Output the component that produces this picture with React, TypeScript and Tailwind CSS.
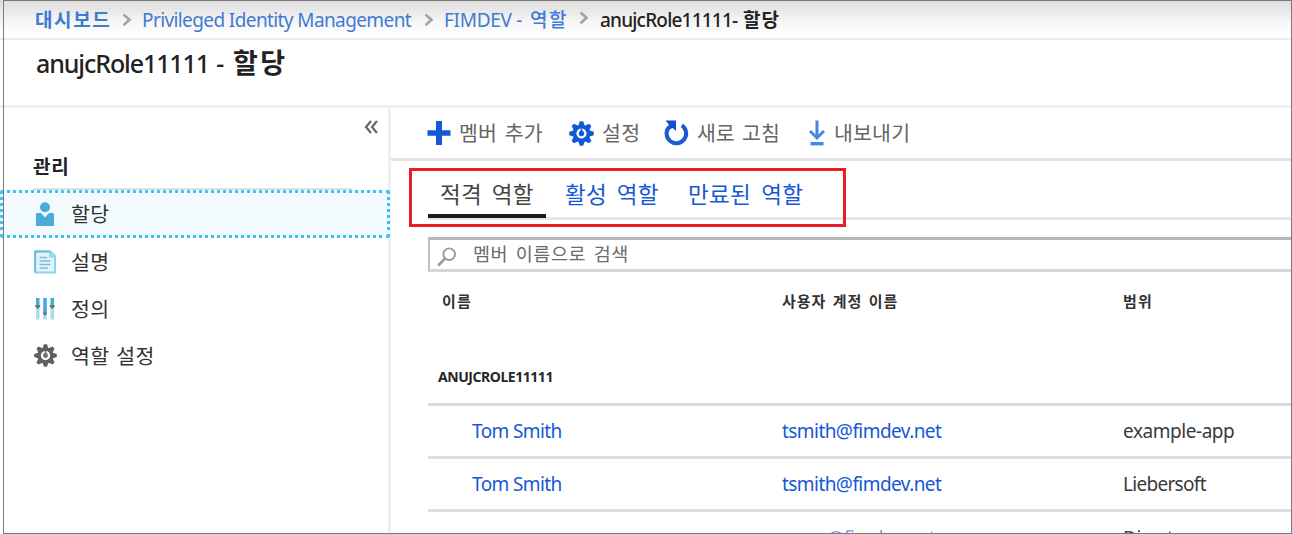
import type { ReactNode } from "react";

function Chevron({ className }: { className: string }) {
  return (
    <svg className={`h-[14px] w-[10px] shrink-0 ${className}`} viewBox="0 0 10 14" fill="none" stroke="#a3a3a3" strokeWidth="2.6">
      <path d="M1.5 1.5 7.5 6.8 1.5 12.2" />
    </svg>
  );
}

function GearIcon({ color, hub, className }: { color: string; hub: string; className: string }) {
  return (
    <svg className={`shrink-0 ${className}`} viewBox="-12 -12 24 24">
      <g fill={color}>
        {[0, 45, 90, 135, 180, 225, 270, 315].map((a) => (
          <path key={a} d="M-3.2-7-1.6-11.8H1.6L3.2-7Z" transform={`rotate(${a})`} />
        ))}
      </g>
      <circle r="6.6" fill="none" stroke={color} strokeWidth="3.6" />
      <circle r="4.6" fill="#fff" opacity="0.7" />
      <circle r="2.6" fill={hub} />
      <path d="M0-5V0" stroke={hub} strokeWidth="1.6" />
    </svg>
  );
}

function PersonIcon() {
  return (
    <svg className="h-6 w-[22px]" viewBox="0 0 22 24" fill="#49abd8">
      <circle cx="11" cy="5.3" r="5" />
      <path d="M2 12.2Q2 11 3.2 11H7l4 4.6L15 11h3.8Q20 11 20 12.2V24H2Z" />
    </svg>
  );
}

function DocumentIcon() {
  return (
    <svg className="h-6 w-[22px]" viewBox="0 0 22 24" fill="none">
      <path d="M1.2 1.5H16.5L21 6V22.5H1.2Z" fill="#e2f4fb" stroke="#8fd0ea" strokeWidth="2" strokeLinejoin="round" />
      <path d="M1.2 22.5V1.5H16" stroke="#68bde0" strokeWidth="1.8" />
      <path d="M16 1.5V6.5H21" fill="#a9dcf0" stroke="#8fd0ea" strokeWidth="1.5" />
      <path d="M5.5 7.5H13M5.5 11H16.5M5.5 14.5H16.5M5.5 18H14" stroke="#74bddb" strokeWidth="1.7" />
    </svg>
  );
}

function SlidersIcon() {
  return (
    <svg className="h-6 w-[22px]" viewBox="0 0 22 24">
      <path d="M2 1H5.5V9H2ZM9.2 1H12.8V16H9.2ZM16.5 1H20V9H16.5Z" fill="#45abd9" />
      <path d="M2 11H5.5V22.5H2ZM9.2 18H12.8V22.5H9.2ZM16.5 11H20V22.5H16.5Z" fill="#a9dcef" />
      <path d="M1.3 8H6.2V9.8L3.8 12 1.3 9.8ZM9 15.5H13V16.8L11 19 9 16.8ZM15.8 8H20.7V9.8L18.2 12 15.8 9.8Z" fill="#66767f" />
    </svg>
  );
}

function PlusIcon() {
  return (
    <svg className="h-6 w-6" viewBox="0 0 24 24" fill="#1259d6">
      <path d="M9 0h6v9.2h8.5v5.6H15V24H9v-9.2H.5V9.2H9Z" />
    </svg>
  );
}

function RefreshIcon() {
  return (
    <svg className="h-[26px] w-[25px]" viewBox="0 0 25 26">
      <path d="M17.8 5.3A9.8 9.8 0 1 1 5.2 6.8" fill="none" stroke="#1c59d2" strokeWidth="4" />
      <path d="M1.5.5H12V11L8.8 8 5 9.5 4.5 4Z" fill="#1450cc" />
    </svg>
  );
}

function DownloadIcon() {
  return (
    <svg className="h-[26px] w-4" viewBox="0 0 16 26" fill="none" stroke="#4486e4">
      <path d="M8 .5V17" strokeWidth="3" />
      <path d="M1 11 8 18l7-7" strokeWidth="3" />
      <path d="M1.5 23.700H14.5" strokeWidth="3.4" />
    </svg>
  );
}

function SearchIcon() {
  return (
    <svg className="h-[20px] w-[20px]" viewBox="0 0 20 20" fill="none" stroke="#999">
      <circle cx="12.2" cy="7.2" r="5.8" strokeWidth="1.9" />
      <path d="M8 11.5 1.2 18.5" strokeWidth="2.6" />
    </svg>
  );
}

function MenuItem({ icon, children }: { icon: ReactNode; children: ReactNode }) {
  return (
    <div className="flex h-[47px] items-center pl-[34px]">
      <span className="flex w-[37px]">{icon}</span>
      <span className="pt-[2px] text-[20.5px] leading-none tracking-[0.4px] text-[#333] [word-spacing:1px]">{children}</span>
    </div>
  );
}

function MemberRow({ scope, scopeClass }: { scope: string; scopeClass: string }) {
  return (
    <div className="flex h-[53px] items-center border-b-[3px] border-[#dedede] text-[19px] leading-none text-[#1558d6]">
      <span className="w-[354px] pl-[44px] tracking-[-0.6px]">Tom Smith</span>
      <span className="w-[341px] tracking-[-0.56px]">tsmith@fimdev.net</span>
      <span className={`text-[#3a3a3a] ${scopeClass}`}>{scope}</span>
    </div>
  );
}

export default function App() {
  return (
    <div className="relative flex h-[534px] w-[1292px] flex-col overflow-hidden bg-white font-['Noto_Sans','Noto_Sans_CJK_KR',sans-serif] whitespace-nowrap">
      <nav className="flex h-[40px] shrink-0 items-center border-b-2 border-[#ebebeb] bg-linear-to-b from-[#dcdcdc] via-[#f7f7f7] via-60% to-white pt-[2px] pl-[35px] text-[19px] leading-none text-[#3f7ad4]">
        <span className="w-[87px] font-bold tracking-[1.6px]">대시보드</span>
        <Chevron className="mr-[10px]" />
        <span className="w-[282px] tracking-[-0.6px]">Privileged Identity Management</span>
        <Chevron className="mr-[10px]" />
        <span className="flex w-[135px]">
          <span className="w-[86px] tracking-[-0.3px]">FIMDEV -</span>
          <span className="font-medium tracking-[1.4px]">역할</span>
        </span>
        <Chevron className="mr-[11px] mb-[5px]" />
        <span className="flex font-medium text-[#222]">
          <span className="w-[143px] tracking-[-0.8px]">anujcRole11111-</span>
          <span className="font-bold tracking-[1px]">할당</span>
        </span>
      </nav>

      <header className="h-[68px] shrink-0 border-b-[3px] border-[#f0f0f0] pt-[9px] pl-[36px]">
        <h1 className="flex items-baseline text-[25px] leading-[28px] font-medium text-[#222]">
          <span className="w-[197px] tracking-[-1.1px] [word-spacing:2px]">anujcRole11111 -</span>
          <span className="text-[27px] font-bold tracking-[2.5px]">할당</span>
        </h1>
      </header>

      <div className="flex flex-1">
        <aside className="w-[391px] shrink-0 border-r-[3px] border-[#efefef]">
          <div className="flex h-[36px] justify-end pt-[12px] pr-[10px]">
            <svg className="h-[14px] w-[14px]" viewBox="0 0 14 14" fill="none" stroke="#666" strokeWidth="2.2">
              <path d="M7 1 2 7l5 6M13 1 8 7l5 6" />
            </svg>
          </div>
          <div className="ml-[33px] flex h-[46px] w-[319px] items-center border-b-2 border-[#dedede] text-[19px] leading-none font-bold text-[#222]">
            <span className="pt-[3px] tracking-[0.8px]">관리</span>
          </div>
          <div className="h-[48px] w-[390px] rounded-[2px] border-[3px] border-dotted border-[#3cc3f2] bg-[#f3fbff]">
            <div className="-mt-[3px] -ml-[3px]">
              <MenuItem icon={<PersonIcon />}>할당</MenuItem>
            </div>
          </div>
          <MenuItem icon={<DocumentIcon />}>설명</MenuItem>
          <MenuItem icon={<SlidersIcon />}>정의</MenuItem>
          <MenuItem icon={<GearIcon color="#606060" hub="#707070" className="h-[23px] w-[23px]" />}>역할 설정</MenuItem>
        </aside>

        <main className="flex-1">
          <div className="flex h-[53px] items-center border-b-[3px] border-[#e2e2e2] pl-[36px] text-[20.5px] leading-none text-[#666] [word-spacing:2px]">
            <PlusIcon />
            <span className="w-[118px] pt-px pl-[8px] tracking-[0.2px]">멤버 추가</span>
            <GearIcon color="#1259d6" hub="#1259d6" className="h-[25px] w-[25px]" />
            <span className="w-[70px] pt-px pl-[8px] tracking-[0.3px]">설정</span>
            <RefreshIcon />
            <span className="w-[120px] pt-px pl-[8px]">새로 고침</span>
            <DownloadIcon />
            <span className="pl-[9px] tracking-[0.2px]">내보내기</span>
          </div>

          <div className="ml-[37px] flex h-[59px] items-end border-b-[3px] border-[#e6e6e6] text-[22.5px] leading-none text-[#1558d6] [word-spacing:4px]">
            <span className="-mb-[1px] h-[34px] w-[118px] border-b-4 border-[#1c1c1c] pl-[12px] tracking-[0.2px] text-[#444]">적격 역할</span>
            <span className="h-[33px] w-[123px] pl-[19px] tracking-[0.2px]">활성 역할</span>
            <span className="h-[33px] pl-[19px] tracking-[0.3px]">만료된 역할</span>
          </div>

          <div className="mt-[17px] ml-[37px] flex h-[35px] items-center border-t-[3px] border-b-[3px] border-l-2 border-t-[#b8b8b8] border-b-[#d6d6d6] border-l-[#c0c0c0] pl-[7px]">
            <span className="mt-[5px] flex w-[36px]"><SearchIcon /></span>
            <span className="text-[18.5px] leading-none tracking-[0.5px] text-[#6b6b6b] [word-spacing:2.5px]">멤버 이름으로 검색</span>
          </div>

          <div className="ml-[37px]">
            <div className="flex h-[59px] items-center text-[15px] leading-none font-bold text-[#333] [word-spacing:1.5px]">
              <span className="w-[354px] pl-[14px] tracking-[1.3px]">이름</span>
              <span className="w-[341px] tracking-[1px]">사용자 계정 이름</span>
              <span className="tracking-[1.3px]">범위</span>
            </div>
            <div className="flex h-[75px] items-end border-b-[3px] border-[#dadada] pb-[19px] pl-[10px] text-[14px] leading-none font-bold tracking-[-0.45px] text-[#262626]">
              ANUJCROLE11111
            </div>
            <MemberRow scope="example-app" scopeClass="tracking-[-0.45px]" />
            <MemberRow scope="Liebersoft" scopeClass="tracking-[-0.7px]" />
            <div className="flex h-[24px] overflow-hidden pt-[14px] text-[19px] leading-[24px] blur-[0.7px]">
              <span className="w-[695px] pl-[399px] tracking-[-0.3px] text-[#6b9ce8]">@fimdev.net</span>
              <span className="tracking-[-0.4px] text-[#444]">Direct</span>
            </div>
          </div>
        </main>
      </div>

      <div className="pointer-events-none absolute inset-y-0 right-0 left-[3px] border border-[#7a7a7a]" />
      <div className="pointer-events-none absolute top-[168px] left-[409px] h-[59px] w-[437px] border-[3px] border-[#ec1c24]" />
    </div>
  );
}
